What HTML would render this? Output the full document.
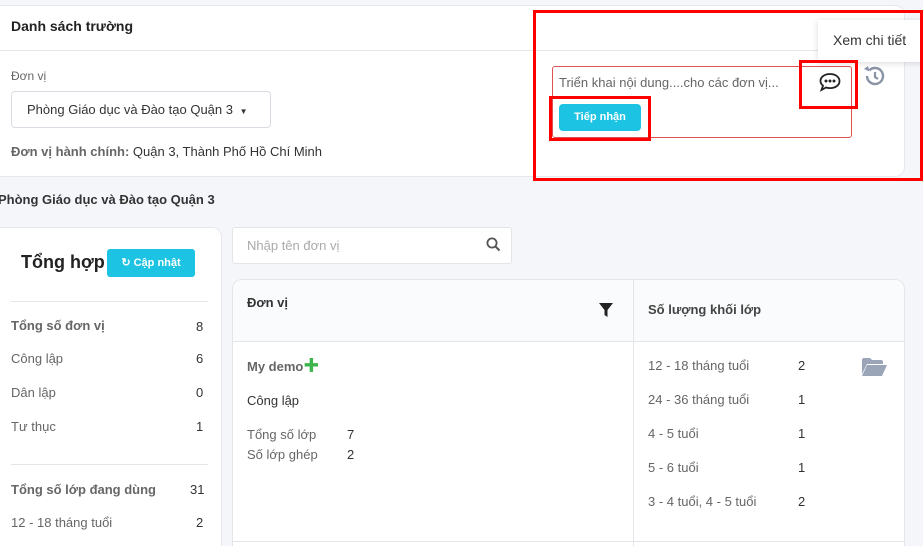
<!DOCTYPE html>
<html><head><meta charset="utf-8"><style>
*{box-sizing:border-box;margin:0;padding:0}
html,body{width:923px;height:546px;overflow:hidden}
body{background:#f4f6fa;font-family:"Liberation Sans","Noto Sans CJK SC",sans-serif;color:#333;position:relative;font-size:13px}
.a{position:absolute;white-space:nowrap}
.card{background:#fff;border-radius:10px;border:1px solid #e6e8ee}
.g{color:#666}
</style></head><body>
<div class="a card" style="left:-10px;top:5px;width:915px;height:172px"></div>
<div class="a" style="left:11px;top:18px;font-weight:bold;font-size:14px;color:#222">Danh sách trường</div>
<div class="a" style="left:0;top:50px;width:905px;height:1px;background:#e3e5ea"></div>
<div class="a g" style="left:11px;top:69px;font-size:12px">Đơn vị</div>
<div class="a" style="left:11px;top:91px;width:260px;height:37px;border:1px solid #d8dbe2;border-radius:4px;padding:10px 15px;font-size:13px;color:#333">Phòng Giáo dục và Đào tạo Quận 3 <span style="font-size:8px;margin-left:3px">▼</span></div>
<div class="a" style="left:11px;top:144px;font-size:13px;color:#333"><b style="color:#666">Đơn vị hành chính:</b> Quận 3, Thành Phố Hồ Chí Minh</div>
<div class="a" style="left:552px;top:66px;width:300px;height:72px;border:1px solid #e05050;border-radius:3px"></div>
<div class="a g" style="left:559px;top:75px;font-size:13px">Triển khai nội dung....cho các đơn vị...</div>
<div class="a" style="left:559px;top:104px;width:82px;height:27px;background:#1cc3e3;border-radius:4px;color:#fff;font-weight:bold;font-size:11px;text-align:center;line-height:27px">Tiếp nhận</div>
<svg class="a" style="left:818px;top:71px" width="24" height="22" viewBox="0 0 24 22"><path d="M12 3C6.5 3 2.5 6 2.5 10c0 2 1 3.5 2.5 4.7L3.5 19l4.5-2.5c1.2.4 2.6.6 4 .6 5.5 0 9.5-3 9.5-7S17.5 3 12 3z" fill="none" stroke="#222" stroke-width="1.8"/><circle cx="8" cy="10" r="1.5" fill="#222"/><circle cx="12" cy="10" r="1.5" fill="#222"/><circle cx="16" cy="10" r="1.5" fill="#222"/></svg>
<svg class="a" style="left:862px;top:64px" width="24" height="24" viewBox="0 0 24 24"><path d="M5 12a8 8 0 1 0 2.5-5.8" fill="none" stroke="#8a93a6" stroke-width="2.4"/><path d="M2 5l5.5 2.5L6 2z" fill="#8a93a6"/><path d="M13 8v5l3 2" fill="none" stroke="#8a93a6" stroke-width="2.2"/></svg>
<div class="a" style="left:818px;top:20px;width:105px;height:42px;background:#fff;box-shadow:0 1px 6px rgba(0,0,0,.15);padding:12px 15px;font-size:14px;color:#333">Xem chi tiết</div>
<div class="a" style="left:533px;top:10px;width:390px;height:171px;border:3px solid #f00"></div>
<div class="a" style="left:799px;top:60px;width:59px;height:49px;border:3px solid #f00"></div>
<div class="a" style="left:549px;top:96px;width:102px;height:45px;border:3px solid #f00"></div>

<div class="a" style="left:-2px;top:192px;font-weight:bold;font-size:13px;color:#333">Phòng Giáo dục và Đào tạo Quận 3</div>
<div class="a card" style="left:-10px;top:227px;width:232px;height:319px;border-bottom:none;border-radius:10px 10px 0 0"></div>
<div class="a" style="left:21px;top:252px;font-size:18px;font-weight:bold;color:#222">Tổng hợp</div>
<div class="a" style="left:107px;top:249px;width:88px;height:28px;background:#1cc3e3;border-radius:3px;color:#fff;font-weight:bold;font-size:11px;text-align:center;line-height:28px">↻ Cập nhật</div>
<div class="a" style="left:11px;top:301px;width:197px;height:1px;background:#e3e5ea"></div>
<div class="a" style="left:11px;top:464px;width:197px;height:1px;background:#e3e5ea"></div>
<div class="a g" style="left:11px;top:318px;font-weight:bold">Tổng số đơn vị</div><div class="a" style="left:196px;top:319px">8</div>
<div class="a g" style="left:11px;top:351px">Công lập</div><div class="a" style="left:196px;top:351px">6</div>
<div class="a g" style="left:11px;top:385px">Dân lập</div><div class="a" style="left:196px;top:385px">0</div>
<div class="a g" style="left:11px;top:419px">Tư thục</div><div class="a" style="left:196px;top:419px">1</div>
<div class="a g" style="left:11px;top:482px;font-weight:bold">Tổng số lớp đang dùng</div><div class="a" style="left:190px;top:482px">31</div>
<div class="a g" style="left:11px;top:515px">12 - 18 tháng tuổi</div><div class="a" style="left:196px;top:515px">2</div>

<div class="a" style="left:232px;top:227px;width:280px;height:37px;background:#fff;border:1px solid #e3e5ea;border-radius:3px"></div>
<div class="a" style="left:247px;top:238px;color:#aaa">Nhập tên đơn vị</div>
<svg class="a" style="left:486px;top:237px" width="15" height="15" viewBox="0 0 15 15"><circle cx="6" cy="6" r="4.6" fill="none" stroke="#555" stroke-width="1.8"/><path d="M9.5 9.5l4 4" stroke="#555" stroke-width="2"/></svg>

<div class="a" style="left:232px;top:279px;width:673px;height:267px;background:#fff;border:1px solid #e3e5ea;border-bottom:none;border-radius:10px 10px 0 0;overflow:hidden">
<div style="height:62px;background:#fafbfc;border-bottom:1px solid #e3e5ea"></div>
<div class="a" style="left:400px;top:0;width:1px;height:267px;background:#e3e5ea"></div>
<div class="a" style="left:0;top:261px;width:673px;height:1px;background:#e3e5ea"></div>
</div>
<div class="a" style="left:247px;top:295px;font-weight:bold">Đơn vị</div>
<svg class="a" style="left:599px;top:303px" width="14" height="14" viewBox="0 0 14 14"><path d="M0 0h14L8.5 7v7l-3-2V7z" fill="#222"/></svg>
<div class="a" style="left:648px;top:302px;font-weight:bold;color:#444">Số lượng khối lớp</div>
<div class="a" style="left:247px;top:359px;font-weight:bold;color:#666">My demo<span style="color:#3cb54a;font-size:16px;line-height:10px">✚</span></div>
<div class="a" style="left:247px;top:393px">Công lập</div>
<div class="a g" style="left:247px;top:427px">Tổng số lớp</div><div class="a" style="left:347px;top:427px">7</div>
<div class="a g" style="left:247px;top:447px">Số lớp ghép</div><div class="a" style="left:347px;top:447px">2</div>
<div class="a g" style="left:648px;top:358px">12 - 18 tháng tuổi</div><div class="a" style="left:798px;top:358px">2</div>
<div class="a g" style="left:648px;top:392px">24 - 36 tháng tuổi</div><div class="a" style="left:798px;top:392px">1</div>
<div class="a g" style="left:648px;top:426px">4 - 5 tuổi</div><div class="a" style="left:798px;top:426px">1</div>
<div class="a g" style="left:648px;top:460px">5 - 6 tuổi</div><div class="a" style="left:798px;top:460px">1</div>
<div class="a g" style="left:648px;top:494px">3 - 4 tuổi, 4 - 5 tuổi</div><div class="a" style="left:798px;top:494px">2</div>
<svg class="a" style="left:862px;top:358px" width="25" height="18" viewBox="0 0 25 18"><path d="M0 2a2 2 0 0 1 2-2h6l2 2h9a2 2 0 0 1 2 2v2H5L0 16z" fill="#9aa5b8"/><path d="M5 7h20l-5 11H0z" fill="#9aa5b8"/></svg>
</body></html>
